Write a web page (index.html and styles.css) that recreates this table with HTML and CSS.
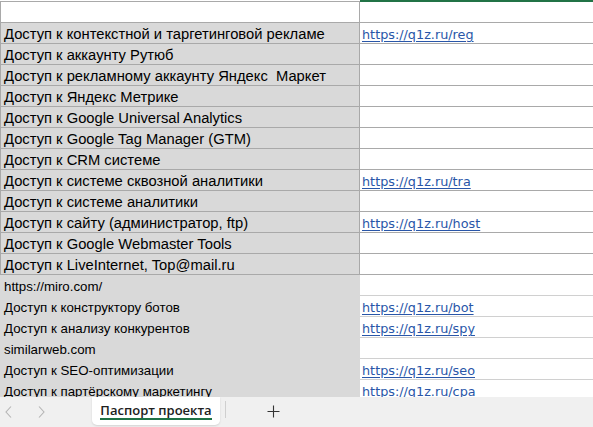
FILE: index.html
```html
<!DOCTYPE html>
<html lang="ru">
<head>
<meta charset="utf-8">
<link rel="stylesheet" href="styles.css">
</head>
<body>
<div class="app">
  <div class="sheet">
    <div class="row row-head">
      <div class="cell c1"></div>
      <div class="cell c2"></div>
    </div>
    <div class="row"><div class="cell c1">Доступ к контекстной и таргетинговой рекламе</div><div class="cell c2"><a class="link">https://q1z.ru/reg</a></div></div>
    <div class="row"><div class="cell c1">Доступ к аккаунту Рутюб</div><div class="cell c2"></div></div>
    <div class="row"><div class="cell c1">Доступ к рекламному аккаунту Яндекс&nbsp; Маркет</div><div class="cell c2"></div></div>
    <div class="row"><div class="cell c1">Доступ к Яндекс Метрике</div><div class="cell c2"></div></div>
    <div class="row"><div class="cell c1">Доступ к Google Universal Analytics</div><div class="cell c2"></div></div>
    <div class="row"><div class="cell c1">Доступ к Google Tag Manager (GTM)</div><div class="cell c2"></div></div>
    <div class="row"><div class="cell c1">Доступ к CRM системе</div><div class="cell c2"></div></div>
    <div class="row"><div class="cell c1">Доступ к системе сквозной аналитики</div><div class="cell c2"><a class="link">https://q1z.ru/tra</a></div></div>
    <div class="row"><div class="cell c1">Доступ к системе аналитики</div><div class="cell c2"></div></div>
    <div class="row"><div class="cell c1">Доступ к сайту (администратор, ftp)</div><div class="cell c2"><a class="link">https://q1z.ru/host</a></div></div>
    <div class="row"><div class="cell c1">Доступ к Google Webmaster Tools</div><div class="cell c2"></div></div>
    <div class="row"><div class="cell c1">Доступ к LiveInternet, Top@mail.ru</div><div class="cell c2"></div></div>
    <div class="row small"><div class="cell c1">https://miro.com/</div><div class="cell c2"></div></div>
    <div class="row small"><div class="cell c1">Доступ к конструктору ботов</div><div class="cell c2"><a class="link">https://q1z.ru/bot</a></div></div>
    <div class="row small"><div class="cell c1">Доступ к анализу конкурентов</div><div class="cell c2"><a class="link">https://q1z.ru/spy</a></div></div>
    <div class="row small"><div class="cell c1">similarweb.com</div><div class="cell c2"></div></div>
    <div class="row small"><div class="cell c1">Доступ к SEO-оптимизации</div><div class="cell c2"><a class="link">https://q1z.ru/seo</a></div></div>
    <div class="row small"><div class="cell c1">Доступ к партёрскому маркетингу</div><div class="cell c2"><a class="link">https://q1z.ru/cpa</a></div></div>
  </div>
  <div class="tabs">
    <div class="nav">
      <svg class="chev" width="10" height="14" viewBox="0 0 10 14"><path d="M7 1.5 L2 7 L7 12.5" fill="none" stroke="#b4b4b4" stroke-width="1.1"/></svg>
      <svg class="chev" width="10" height="14" viewBox="0 0 10 14"><path d="M3 1.5 L8 7 L3 12.5" fill="none" stroke="#b4b4b4" stroke-width="1.1"/></svg>
    </div>
    <div class="tab">Паспорт проекта</div>
    <div class="sep"></div>
    <svg class="plus" width="13" height="13" viewBox="0 0 13 13"><path d="M6.5 0.5 V12.5 M0.5 6.5 H12.5" fill="none" stroke="#333" stroke-width="1.1"/></svg>
  </div>
</div>
</body>
</html>
```
FILE: styles.css
```css
html, body {
  margin: 0;
  padding: 0;
  background: #ffffff;
}
.app {
  width: 593px;
  height: 427px;
  overflow: hidden;
  display: flex;
  flex-direction: column;
}
.sheet {
  height: 397px;
  overflow: hidden;
  flex: none;
}
.row {
  display: grid;
  grid-template-columns: 360px 1fr;
  height: 21px;
}
.cell {
  box-sizing: border-box;
  height: 21px;
  border-bottom: 1px solid #a9a9a9;
  white-space: nowrap;
  overflow: hidden;
}
.c1 {
  background: #d9d9d9;
  border-left: 1px solid #a9a9a9;
  border-right: 1px solid #a9a9a9;
  font-family: "Liberation Sans", Arial, sans-serif;
  font-size: 14.75px;
  color: #000;
  padding-left: 3px;
  line-height: 19px;
  padding-top: 2px;
}
.c2 {
  background: #ffffff;
  padding-left: 2px;
  line-height: 19px;
  padding-top: 1px;
}
.row-head {
  height: 23px;
}
.row-head .cell {
  height: 23px;
}
.row-head .c1 {
  background: #ffffff;
  border-top: 1px solid #a9a9a9;
  margin-top: 1px;
  height: 22px;
}
.row-head .c2 {
  border-top: 2px solid #217346;
}
.link {
  font-family: "DejaVu Sans", Verdana, sans-serif;
  font-size: 12.8px;
  color: #2956a8;
  text-decoration: underline;
  text-underline-offset: 2px;
}
.row.small .c1 {
  border: none;
  font-size: 13.3px;
  padding-left: 4px;
  padding-top: 2px;
}
.row.small .c2 {
  border-bottom: 1px solid #d0d0d0;
}
.tabs {
  flex: 1;
  background: #f0f0f0;
  display: flex;
  align-items: flex-start;
  position: relative;
}
.nav {
  display: flex;
  gap: 22px;
  padding: 8px 0 0 4px;
  width: 88px;
}
.tab {
  width: 128px;
  height: 28px;
  box-sizing: border-box;
  background: #ffffff;
  border-radius: 0 0 5px 5px;
  box-shadow: 0 1px 2px rgba(0,0,0,0.12);
  font-family: "Open Sans", "Noto Sans", sans-serif;
  font-weight: 600;
  font-size: 13px;
  color: #202020;
  text-align: center;
  padding-top: 4px;
  position: relative;
}
.tab::after {
  content: "";
  position: absolute;
  left: 8px;
  right: 8px;
  bottom: 5px;
  height: 2px;
  background: #1e7145;
}
.sep {
  width: 1px;
  height: 17px;
  background: #cfcfcf;
  margin: 4px 0 0 5px;
}
.plus {
  margin: 8px 0 0 41px;
}
```
